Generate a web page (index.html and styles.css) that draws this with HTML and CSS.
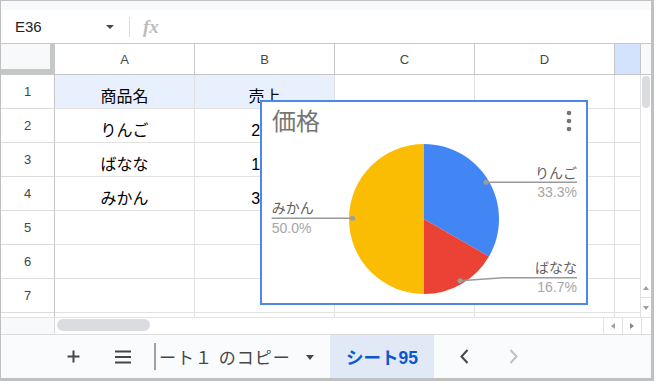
FILE: index.html
```html
<!DOCTYPE html>
<html lang="ja">
<head>
<meta charset="utf-8">
<title>Sheet</title>
<link rel="stylesheet" href="styles.css">
</head>
<body>
<div class="app">
  <div class="topstrip"></div>
  <div class="formula">
    <div class="namebox"><span class="cellref">E36</span><span class="caret"></span></div>
    <div class="fsep"></div>
    <div class="fx">fx</div>
  </div>
  <div class="sheetarea">
    <div class="grid">
      <div class="corner"><div class="corner-in"></div></div>
      <div class="ch">A</div><div class="ch">B</div><div class="ch">C</div><div class="ch">D</div><div class="ch ch-sel"></div>

      <div class="rh">1</div><div class="c hl">商品名</div><div class="c hl">売上</div><div class="c"></div><div class="c"></div><div class="c"></div>
      <div class="rh">2</div><div class="c">りんご</div><div class="c">200</div><div class="c"></div><div class="c"></div><div class="c"></div>
      <div class="rh">3</div><div class="c">ばなな</div><div class="c">100</div><div class="c"></div><div class="c"></div><div class="c"></div>
      <div class="rh">4</div><div class="c">みかん</div><div class="c">300</div><div class="c"></div><div class="c"></div><div class="c"></div>
      <div class="rh">5</div><div class="c"></div><div class="c"></div><div class="c"></div><div class="c"></div><div class="c"></div>
      <div class="rh">6</div><div class="c"></div><div class="c"></div><div class="c"></div><div class="c"></div><div class="c"></div>
      <div class="rh">7</div><div class="c"></div><div class="c"></div><div class="c"></div><div class="c"></div><div class="c"></div>
      <div class="rh part"></div><div class="c part"></div><div class="c part"></div><div class="c part"></div><div class="c part"></div><div class="c part"></div>
    </div>
    <div class="vscroll">
      <div class="vs-head"></div>
      <div class="vs-track"><div class="vs-thumb"></div></div>
      <div class="vs-btn vs-up"><span class="tri-up"></span></div>
      <div class="vs-btn"><span class="tri-down"></span></div>
    </div>
  </div>
  <div class="hscroll">
    <div class="hs-left"></div>
    <div class="hs-track"><div class="hs-thumb"></div></div>
    <div class="hs-btn"><span class="tri-left"></span></div>
    <div class="hs-btn"><span class="tri-right"></span></div>
    <div class="hs-end"></div>
  </div>
  <div class="tabbar">
    <div class="tbtn">
      <svg width="13" height="13" viewBox="0 0 13 13"><path d="M6.5 0.5v12M0.5 6.5h12" stroke="#444746" stroke-width="2" fill="none"/></svg>
    </div>
    <div class="tbtn tbtn-menu">
      <svg width="16" height="14" viewBox="0 0 16 14"><path d="M0 1.5h16M0 7h16M0 12.5h16" stroke="#444746" stroke-width="2" fill="none"/></svg>
    </div>
    <div class="tab-cut">
      <span class="tab-sep"></span>
      <span class="tab-text">ート１ のコピー</span>
      <span class="tab-caret"></span>
    </div>
    <div class="tab-active">シート95</div>
    <div class="tbtn tbtn-prev">
      <svg width="9" height="15" viewBox="0 0 9 15"><path d="M7.5 1L1.5 7.5L7.5 14" stroke="#444746" stroke-width="2" fill="none"/></svg>
    </div>
    <div class="tbtn tbtn-next">
      <svg width="9" height="15" viewBox="0 0 9 15"><path d="M1.5 1L7.5 7.5L1.5 14" stroke="#bdc1c6" stroke-width="2" fill="none"/></svg>
    </div>
  </div>

  <div class="chart">
    <svg width="324" height="201" viewBox="0 0 324 201">
      <text class="ct-title" x="10" y="28">価格</text>
      <circle cx="307" cy="11" r="2.3" class="kebab"/>
      <circle cx="307" cy="19" r="2.3" class="kebab"/>
      <circle cx="307" cy="27" r="2.3" class="kebab"/>

      <path d="M162 117 L162 42 A75 75 0 0 1 226.95 154.5 Z" fill="#4285f4"/>
      <path d="M162 117 L226.95 154.5 A75 75 0 0 1 162 192 Z" fill="#ea4335"/>
      <path d="M162 117 L162 192 A75 75 0 0 1 162 42 Z" fill="#fbbc04"/>

      <path d="M224 80.3 H315" class="leader"/>
      <circle cx="224" cy="80.3" r="2.5" class="ldot"/>
      <text class="ct-name" x="315" y="76.3" text-anchor="end">りんご</text>
      <text class="ct-pct" x="315" y="94.7" text-anchor="end">33.3%</text>

      <path d="M198 178.7 L241 175.7 H315" class="leader"/>
      <circle cx="198" cy="178.7" r="2.5" class="ldot"/>
      <text class="ct-name" x="315" y="170.7" text-anchor="end">ばなな</text>
      <text class="ct-pct" x="315" y="189.7" text-anchor="end">16.7%</text>

      <path d="M9.7 116.3 H90.7" class="leader"/>
      <circle cx="90.7" cy="116.3" r="2.5" class="ldot"/>
      <text class="ct-name" x="9.7" y="110.7">みかん</text>
      <text class="ct-pct" x="9.7" y="131.3">50.0%</text>
    </svg>
  </div>
</div>
</body>
</html>
```

FILE: styles.css
```css
* { box-sizing: border-box; }
html, body { margin: 0; padding: 0; background: #fff; }
body {
  width: 657px;
  height: 381px;
  overflow: hidden;
  font-family: "Liberation Sans", "Noto Sans CJK JP", sans-serif;
}
.app {
  position: relative;
  width: 654px;
  height: 381px;
  border: 1px solid #c0c0c0;
  border-right-width: 3px;
  border-bottom-width: 3px;
  display: flex;
  flex-direction: column;
  overflow: hidden;
  background: #fff;
}
.topstrip { flex: none; height: 9px; background: #f8f9fa; }

/* formula bar */
.formula {
  flex: none;
  height: 34px;
  display: flex;
  align-items: center;
  border-bottom: 1px solid #c4c7c5;
  background: #fff;
}
.namebox {
  width: 128px;
  height: 100%;
  display: flex;
  align-items: center;
  justify-content: space-between;
  padding: 0 15px 0 14px;
}
.cellref { font-size: 15px; color: #202124; }
.caret {
  width: 0; height: 0;
  border-left: 4.5px solid transparent;
  border-right: 4.5px solid transparent;
  border-top: 4.5px solid #444746;
  margin-top: 1px;
}
.fsep { width: 1px; height: 20px; background: #dadce0; }
.fx {
  margin-left: 13px;
  font-family: "Liberation Serif", serif;
  font-style: italic;
  font-weight: bold;
  font-size: 19px;
  color: #bdbdbd;
  margin-top: 1px;
}

/* sheet grid */
.sheetarea { flex: none; height: 273px; display: flex; }
.grid {
  width: 640px;
  display: grid;
  grid-template-columns: 54px repeat(4, 140px) 26px;
  grid-template-rows: 31px repeat(7, 34px) 4px;
}
.corner { background: #c4c7c5; padding: 0 5px 6px 0; }
.corner-in { width: 100%; height: 100%; background: #f8f9fa; }
.ch {
  border-right: 1px solid #c4c7c5;
  border-bottom: 1px solid #c4c7c5;
  display: flex;
  align-items: center;
  justify-content: center;
  font-size: 13px;
  color: #444746;
  background: #fff;
}
.ch-sel { background: #d3e3fd; }
.rh {
  border-right: 1px solid #c4c7c5;
  border-bottom: 1px solid #dcdcdc;
  display: flex;
  align-items: center;
  justify-content: center;
  font-size: 13px;
  color: #444746;
}
.c {
  border-right: 1px solid #e2e2e2;
  border-bottom: 1px solid #e2e2e2;
  display: flex;
  align-items: flex-end;
  justify-content: center;
  font-size: 16px;
  line-height: 20px;
  padding-bottom: 1px;
  color: #000;
  white-space: nowrap;
  overflow: hidden;
}
.hl { background: #e8f0fe; }
.part { border-bottom: none; }

/* vertical scrollbar */
.vscroll { width: 10px; display: flex; flex-direction: column; }
.vs-head { height: 31px; background: #f8f9fa; border-bottom: 1px solid #c4c7c5; }
.vs-track { flex: 1; padding: 1px 1px 0 1px; }
.vs-thumb { width: 8px; height: 32px; border-radius: 4px; background: #dadce0; }
.vs-btn { height: 20px; display: flex; align-items: center; justify-content: center; }
.vs-up { border-bottom: 1px solid #dbe3ee; }
.vs-btn + .vs-btn { height: 19px; }
.tri-up, .tri-down, .tri-left, .tri-right { width: 0; height: 0; }
.tri-up { border-left: 3.5px solid transparent; border-right: 3.5px solid transparent; border-bottom: 4px solid #9aa0a6; }
.tri-down { border-left: 3.5px solid transparent; border-right: 3.5px solid transparent; border-top: 4px solid #9aa0a6; }
.tri-left { border-top: 3.5px solid transparent; border-bottom: 3.5px solid transparent; border-right: 4px solid #9aa0a6; }
.tri-right { border-top: 3.5px solid transparent; border-bottom: 3.5px solid transparent; border-left: 4px solid #80868b; }

/* horizontal scrollbar */
.hscroll {
  flex: none;
  height: 17px;
  display: flex;
  border-top: 1px solid #e2e2e2;
}
.hs-left { width: 54px; background: #f8f9fa; border-right: 1px solid #dadce0; }
.hs-track { flex: 1; padding: 1px 0 0 2px; }
.hs-thumb { width: 93px; height: 12px; border-radius: 6px; background: #dadce0; }
.hs-btn {
  width: 19px;
  border-left: 1px solid #e2e2e2;
  display: flex;
  align-items: center;
  justify-content: center;
}
.hs-end { width: 10px; border-left: 1px solid #e2e2e2; }

/* sheet tabs */
.tabbar {
  flex: none;
  height: 44px;
  border-top: 1px solid #dadce0;
  background: #f9fbfd;
  display: flex;
  align-items: stretch;
  padding-left: 52px;
}
.tbtn { width: 40px; display: flex; align-items: center; justify-content: center; }
.tbtn svg { display: block; }
.tbtn-menu { margin-left: 10px; }
.tbtn-prev { margin-left: 10px; }
.tbtn-next { margin-left: 9px; }
.tab-cut {
  margin-left: 11px;
  width: 176px;
  display: flex;
  align-items: center;
}
.tab-sep { width: 2px; height: 27px; background: #a0a0a0; }
.tab-text {
  margin-left: 3px;
  font-size: 17px;
  letter-spacing: 1px;
  color: #444746;
  white-space: nowrap;
}
.tab-caret {
  margin-left: auto;
  margin-right: 16px;
  width: 0; height: 0;
  border-left: 4.5px solid transparent;
  border-right: 4.5px solid transparent;
  border-top: 5px solid #444746;
  margin-top: 2px;
}
.tab-active {
  width: 104px;
  background: #e1e9f7;
  display: flex;
  align-items: center;
  justify-content: center;
  font-size: 17.5px;
  font-weight: bold;
  color: #0b57d0;
  white-space: nowrap;
}

/* chart overlay */
.chart {
  position: absolute;
  left: 259px;
  top: 99px;
  width: 328px;
  height: 205px;
  border: 2px solid #4d87ea;
  background: #fff;
}
.chart svg { display: block; }
.ct-title { font-size: 24px; fill: #757575; font-family: "Liberation Sans", "Noto Sans CJK JP", sans-serif; }
.ct-name { font-size: 14px; fill: #616161; font-family: "Liberation Sans", "Noto Sans CJK JP", sans-serif; }
.ct-pct { font-size: 14px; fill: #a6a6a6; font-family: "Liberation Sans", "Noto Sans CJK JP", sans-serif; }
.kebab { fill: #757575; }
.leader { stroke: #9a9a9a; stroke-width: 1.5; fill: none; }
.ldot { fill: #9e9e9e; }
```
